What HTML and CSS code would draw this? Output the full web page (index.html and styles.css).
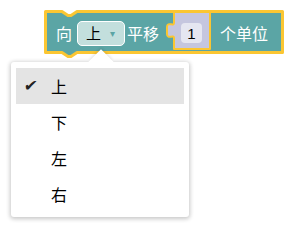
FILE: index.html
```html
<!DOCTYPE html>
<html lang="zh-cn">

<head>
    <meta charset="UTF-8">
    <meta name="viewport" content="width=device-width, initial-scale=1.0">
    <title>向上平移</title>
    <link rel="stylesheet" href="styles.css">
</head>

<body>
    <div class="stage">
        <div class="block">
            <svg class="blockBg" width="240" height="44" viewBox="0 0 240 44">
                <path d="M1.5,1.5 H18 l6,4 h3 l6,-4 H238.5 V42.5 H33 l-6,4 h-3 l-6,-4 H1.5 Z"
                    fill="#5ba5a5" stroke="#fbc632" stroke-width="3" stroke-linejoin="round" />
            </svg>
            <span class="label first">向</span>
            <span class="dropdown">
                <span class="dropText">上</span>
                <span class="caret">▾</span>
            </span>
            <span class="label">平移</span>
            <span class="value">
                <svg class="valueBg" width="45" height="39" viewBox="0 0 45 39">
                    <path d="M8,1 H44 V38 H8 V27 c0,-4 -7,2 -7,-4 V16 c0,-6 7,0 7,-4 Z"
                        fill="#c5c6df" stroke="#fbc632" stroke-width="2" stroke-linejoin="round" />
                </svg>
                <span class="num">1</span>
            </span>
            <span class="label">个单位</span>
        </div>

        <div class="menu">
            <div class="arrow"></div>
            <div class="item active"><span class="check">✔</span>上</div>
            <div class="item">下</div>
            <div class="item">左</div>
            <div class="item">右</div>
        </div>
    </div>
</body>

</html>
```

FILE: styles.css
```css
* {
    margin: 0;
    padding: 0;
    box-sizing: border-box;
}

body {
    background-color: #ffffff;
    font-family: "Noto Sans CJK SC", "Noto Sans", sans-serif;
}

.stage {
    position: relative;
    width: 289px;
    height: 225px;
    padding: 10px 0 0 44px;
}

.block {
    position: relative;
    display: flex;
    align-items: center;
    width: 240px;
    height: 44px;
}

.blockBg {
    position: absolute;
    left: 0;
    top: 0;
    overflow: visible;
}

.label {
    position: relative;
    color: #ffffff;
    font-size: 16px;
    line-height: 20px;
    margin: 1px 0 0 2px;
}

.label.first {
    margin-left: 12px;
}

.dropdown {
    position: relative;
    display: flex;
    align-items: center;
    width: 48px;
    height: 25px;
    margin: 2px 0 0 5px;
    padding-left: 8px;
    background-color: #c3dfdd;
    border: 1px solid #ffffff;
    border-radius: 5px;
}

.dropText {
    color: #000000;
    font-size: 15px;
    line-height: 20px;
}

.caret {
    color: #5ba5a5;
    font-family: "DejaVu Sans", sans-serif;
    font-size: 10px;
    margin-left: 9px;
}

.value {
    position: relative;
    display: flex;
    align-self: flex-start;
    width: 45px;
    height: 39px;
    margin: 1px 0 0 7px;
}

.valueBg {
    position: absolute;
    left: 0;
    top: 0;
}

.num {
    position: relative;
    display: flex;
    align-items: center;
    justify-content: center;
    width: 21px;
    height: 20px;
    margin: 12px 0 0 15px;
    background-color: #e5e6f1;
    border-radius: 4px;
    color: #000000;
    font-family: "Liberation Sans", sans-serif;
    font-size: 15px;
}

.value + .label {
    margin-left: 9px;
}

.menu {
    position: absolute;
    left: 11px;
    top: 62px;
    width: 178px;
    height: 155px;
    padding: 6px 5px 5px;
    background-color: #ffffff;
    border-radius: 3px;
    box-shadow: 0 1px 4px 1px rgba(0, 0, 0, .22);
}

.arrow {
    position: absolute;
    left: 81px;
    top: -9px;
    width: 18px;
    height: 18px;
    background-color: #ffffff;
    transform: rotate(45deg);
    box-shadow: -2px -2px 3px -1px rgba(0, 0, 0, .12);
}

.item {
    position: relative;
    display: flex;
    align-items: center;
    height: 36px;
    padding-left: 35px;
    color: #000000;
    font-size: 16px;
}

.item.active {
    background-color: #e4e4e4;
}

.check {
    position: absolute;
    left: 8px;
    top: 9px;
    font-family: "DejaVu Sans", sans-serif;
    font-size: 16px;
    line-height: 18px;
    color: #222222;
    transform: skewX(-8deg);
}
```
